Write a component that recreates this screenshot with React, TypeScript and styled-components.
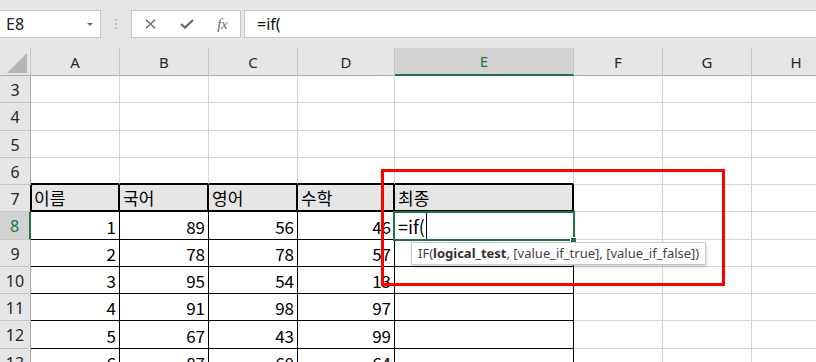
import React from 'react';
import styled, { createGlobalStyle } from 'styled-components';

type Border = 'grid' | 'thin' | 'thick';

const GlobalStyle = createGlobalStyle`
  html, body { margin: 0; padding: 0; background: #fff; }
  body { font-family: "Noto Sans", "Noto Sans CJK KR", sans-serif; }
`;

const Page = styled.div`
  position: relative;
  width: 816px;
  height: 362px;
  overflow: hidden;
  background: #fff;
`;

/* ---------- formula bar ---------- */
const FormulaBar = styled.div`
  display: flex;
  align-items: flex-start;
  height: 48px;
  box-sizing: border-box;
  padding-top: 10px;
  background: #e6e6e6;
`;

const NameBox = styled.div`
  width: 101px;
  height: 28px;
  box-sizing: border-box;
  display: flex;
  align-items: center;
  justify-content: space-between;
  padding: 0 7px 0 6px;
  background: #fff;
  border: 1px solid #c6c6c6;
  border-left: 0;
  font-family: "Noto Sans", sans-serif;
  font-size: 16px;
  color: #222;
`;

const Caret = styled.span`
  width: 0;
  height: 0;
  border-left: 3px solid transparent;
  border-right: 3px solid transparent;
  border-top: 3px solid #6a6a6a;
`;

const Grip = styled.div`
  width: 30px;
  height: 28px;
  display: flex;
  flex-direction: column;
  align-items: center;
  justify-content: center;
  gap: 2px;
`;

const GripDot = styled.span`
  width: 2px;
  height: 2px;
  background: #b9b9b9;
`;

const FxBox = styled.div`
  width: 110px;
  height: 28px;
  box-sizing: border-box;
  display: flex;
  align-items: center;
  padding-left: 1px;
  background: #fff;
  border: 1px solid #c6c6c6;
`;

const IconSlot = styled.span`
  width: 36px;
  height: 26px;
  display: flex;
  align-items: center;
  justify-content: center;
  color: #6b6b6b;
`;

const FxGlyph = styled.span`
  font-family: "Liberation Serif", serif;
  font-style: italic;
  font-size: 15px;
  letter-spacing: -0.5px;
  color: #6b6b6b;
`;

const FormulaInput = styled.div`
  flex: 1;
  margin-left: 3px;
  height: 28px;
  box-sizing: border-box;
  display: flex;
  align-items: center;
  padding-left: 12px;
  background: #fff;
  border: 1px solid #c6c6c6;
  border-right: 0;
  font-family: "Noto Sans", sans-serif;
  font-size: 16px;
  color: #111;
`;

/* ---------- sheet ---------- */
const COLS = ['A', 'B', 'C', 'D', 'E', 'F', 'G', 'H'];
const HEAD_WIDTH = 31;
const COL_WIDTHS = [89, 89, 89, 97, 179, 89, 89, 89];
const ROWS = [3, 4, 5, 6, 7, 8, 9, 10, 11, 12, 13];
const ACTIVE_COL = 4;
const ACTIVE_ROW = 8;

const TABLE: Record<number, string[]> = {
  7: ['이름', '국어', '영어', '수학', '최종'],
  8: ['1', '89', '56', '46', ''],
  9: ['2', '78', '78', '57', ''],
  10: ['3', '95', '54', '13', ''],
  11: ['4', '91', '98', '97', ''],
  12: ['5', '67', '43', '99', ''],
  13: ['6', '87', '60', '64', ''],
};

const Sheet = styled.div`
  display: grid;
  width: max-content;
  grid-template-columns: ${[HEAD_WIDTH, ...COL_WIDTHS].map((w) => `${w}px`).join(' ')};
  grid-template-rows: 28px repeat(${ROWS.length}, 27.25px);
  background: #fff;
`;

const Corner = styled.div`
  box-sizing: border-box;
  display: flex;
  align-items: flex-end;
  justify-content: flex-end;
  padding: 0 3px 2px 0;
  background: #e6e6e6;
  border-right: 1px solid #c6c6c6;
  border-bottom: 1px solid #ababab;
`;

const CornerTriangle = styled.span`
  width: 0;
  height: 0;
  border-left: 20px solid transparent;
  border-bottom: 20px solid #b4b4b4;
`;

const ColHead = styled.div<{ $active?: boolean }>`
  box-sizing: border-box;
  display: flex;
  align-items: center;
  justify-content: center;
  background: ${(p) => (p.$active ? '#d2d2d2' : '#e6e6e6')};
  border-right: 1px solid #c6c6c6;
  border-bottom: ${(p) => (p.$active ? '2px solid #217346' : '1px solid #ababab')};
  font-family: "Noto Sans", sans-serif;
  font-size: 15px;
  color: ${(p) => (p.$active ? '#217346' : '#262626')};
`;

const RowHead = styled.div<{ $active?: boolean; $edge?: boolean }>`
  box-sizing: border-box;
  display: flex;
  align-items: center;
  justify-content: center;
  padding-top: 2px;
  background: ${(p) => (p.$active ? '#d2d2d2' : '#e6e6e6')};
  border-right: ${(p) =>
    p.$active ? '2px solid #217346' : p.$edge ? '1px solid #000' : '1px solid #ababab'};
  border-bottom: 1px solid #c6c6c6;
  font-family: "Noto Sans", sans-serif;
  font-size: 16px;
  color: ${(p) => (p.$active ? '#217346' : '#262626')};
`;

const borderCss = (b: Border) =>
  b === 'thick' ? '2px solid #000' : b === 'thin' ? '1px solid #000' : '1px solid #d4d4d4';

const Cell = styled.div<{
  $right: Border;
  $bottom: Border;
  $fill?: boolean;
  $align: 'left' | 'right';
  $leftEdge?: boolean;
}>`
  position: relative;
  box-sizing: border-box;
  min-width: 0;
  display: flex;
  align-items: flex-end;
  justify-content: ${(p) => (p.$align === 'right' ? 'flex-end' : 'flex-start')};
  padding: 0 3px 4px 3px;
  background: ${(p) => (p.$fill ? '#e7e6e6' : '#fff')};
  border-right: ${(p) => borderCss(p.$right)};
  border-bottom: ${(p) => borderCss(p.$bottom)};
  box-shadow: ${(p) => (p.$leftEdge ? 'inset 1px 0 0 #000' : 'none')};
  font-family: "Noto Sans CJK KR", "Noto Sans", sans-serif;
  font-size: 17px;
  line-height: 17px;
  color: #000;
  white-space: nowrap;
`;

const ActiveFrame = styled.div`
  position: absolute;
  left: -2px;
  top: -1px;
  right: -2px;
  bottom: -2px;
  border: 2px solid #217346;
  pointer-events: none;
  z-index: 2;
`;

const FillHandle = styled.span`
  position: absolute;
  right: -3px;
  bottom: -4px;
  width: 5px;
  height: 5px;
  background: #217346;
  border-left: 1px solid #fff;
  border-top: 1px solid #fff;
`;

const EditText = styled.span`
  display: flex;
  align-items: flex-end;
  font-size: 18px;
  line-height: 18px;
`;

const TextCursor = styled.span`
  display: inline-block;
  width: 1px;
  height: 26px;
  margin-left: 1px;
  margin-bottom: -4px;
  background: #000;
`;

const Tooltip = styled.div`
  position: absolute;
  left: 16px;
  top: 30px;
  z-index: 3;
  height: 23px;
  box-sizing: border-box;
  display: flex;
  align-items: center;
  padding: 0 6px;
  background: #fff;
  border: 1px solid #c8c8c8;
  box-shadow: 1px 2px 3px rgba(0, 0, 0, 0.16);
  font-family: "Noto Sans", sans-serif;
  font-size: 13px;
  line-height: 1;
  color: #444;
  white-space: nowrap;

  b {
    font-weight: 700;
    color: #333;
  }
`;

const Annotation = styled.div`
  position: absolute;
  left: 381px;
  top: 169px;
  width: 344px;
  height: 117px;
  box-sizing: border-box;
  border: 3px solid #ff0000;
  pointer-events: none;
  z-index: 5;
`;

const XIcon = () => (
  <svg width="11" height="10" viewBox="0 0 11 10" fill="none">
    <path d="M1 0.8 L10 9.2 M10 0.8 L1 9.2" stroke="currentColor" strokeWidth="1.4" />
  </svg>
);

const CheckIcon = () => (
  <svg width="14" height="10" viewBox="0 0 14 10" fill="none">
    <path d="M1 5 L5 8.6 L13 1" stroke="currentColor" strokeWidth="2.3" />
  </svg>
);

function tableBorders(row: number, col: number): { right: Border; bottom: Border } {
  const inTable = col <= 4;
  if (!inTable) return { right: 'grid', bottom: 'grid' };
  if (row === 6) return { right: 'grid', bottom: 'thick' };
  if (row === 7) return { right: 'thick', bottom: 'thick' };
  if (row >= 8) return { right: 'thin', bottom: 'thin' };
  return { right: 'grid', bottom: 'grid' };
}

export default function App() {
  return (
    <Page>
      <GlobalStyle />
      <FormulaBar>
        <NameBox>
          <span>E8</span>
          <Caret />
        </NameBox>
        <Grip>
          <GripDot />
          <GripDot />
          <GripDot />
        </Grip>
        <FxBox>
          <IconSlot>
            <XIcon />
          </IconSlot>
          <IconSlot>
            <CheckIcon />
          </IconSlot>
          <IconSlot>
            <FxGlyph>fx</FxGlyph>
          </IconSlot>
        </FxBox>
        <FormulaInput>=if(</FormulaInput>
      </FormulaBar>

      <Sheet>
        <Corner>
          <CornerTriangle />
        </Corner>
        {COLS.map((c, i) => (
          <ColHead key={c} $active={i === ACTIVE_COL}>
            {c}
          </ColHead>
        ))}

        {ROWS.map((r) => (
          <React.Fragment key={r}>
            <RowHead $active={r === ACTIVE_ROW} $edge={r === 7}>
              {r}
            </RowHead>
            {COLS.map((c, ci) => {
              const { right, bottom } = tableBorders(r, ci);
              const value = TABLE[r]?.[ci] ?? '';
              const isActive = r === ACTIVE_ROW && ci === ACTIVE_COL;
              return (
                <Cell
                  key={c}
                  $right={right}
                  $bottom={bottom}
                  $fill={r === 7 && ci <= 4}
                  $align={r === 7 || isActive ? 'left' : 'right'}
                  $leftEdge={r === 7 && ci === 0}
                >
                  {isActive ? (
                    <>
                      <EditText>
                        =if(
                        <TextCursor />
                      </EditText>
                      <ActiveFrame>
                        <FillHandle />
                      </ActiveFrame>
                      <Tooltip>
                        <span>
                          IF(<b>logical_test</b>, [value_if_true], [value_if_false])
                        </span>
                      </Tooltip>
                    </>
                  ) : (
                    value
                  )}
                </Cell>
              );
            })}
          </React.Fragment>
        ))}
      </Sheet>

      <Annotation />
    </Page>
  );
}
